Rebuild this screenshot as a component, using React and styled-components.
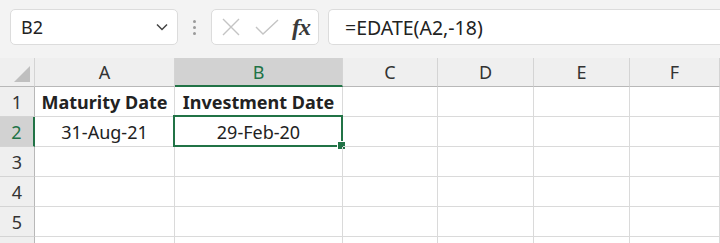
import styled, { createGlobalStyle } from "styled-components";

const GlobalStyle = createGlobalStyle`
    html, body {
        margin: 0;
        padding: 0;
        background: #ffffff;
        overflow: hidden;
    }
    body {
        font-family: "Noto Sans", "Open Sans", sans-serif;
        color: #222;
    }
`;

const columns = ["A", "B", "C", "D", "E", "F"];
const widths = [35, 140, 168, 95, 96, 96, 90];

const data = {
    1: { A: { text: "Maturity Date", bold: true }, B: { text: "Investment Date", bold: true } },
    2: { A: { text: "31-Aug-21" }, B: { text: "29-Feb-20" } },
};

function App() {
    return (
        <Wrapper>
            <GlobalStyle />
            {/* Formula bar */}
            <Toolbar>
                <NameBox>
                    <span>B2</span>
                    <svg width="14" height="10" viewBox="0 0 14 10">
                        <path d="M2 2.5 L7 7.5 L12 2.5" fill="none" stroke="#444" strokeWidth="1.5" />
                    </svg>
                </NameBox>
                <Dots>
                    <i />
                    <i />
                    <i />
                </Dots>
                <FxBox>
                    <svg width="22" height="22" viewBox="0 0 22 22">
                        <path d="M3 3 L19 19 M19 3 L3 19" stroke="#c4c4c4" strokeWidth="1.4" />
                    </svg>
                    <svg width="26" height="22" viewBox="0 0 26 22">
                        <path d="M2 11 L9 18 L24 4" fill="none" stroke="#c4c4c4" strokeWidth="1.4" />
                    </svg>
                    <Fx>fx</Fx>
                </FxBox>
                <FormulaBox>=EDATE(A2,-18)</FormulaBox>
            </Toolbar>

            {/* Grid */}
            <Sheet>
                <Corner>
                    <svg width="16" height="16" viewBox="0 0 16 16">
                        <path d="M16 0 L16 16 L0 16 Z" fill="#bfbfbf" />
                    </svg>
                </Corner>
                {columns.map((c) => (
                    <ColHead key={c} $active={c === "B"}>
                        {c}
                    </ColHead>
                ))}
                {[1, 2, 3, 4, 5, 6].map((r) => (
                    <Row key={r} r={r} />
                ))}
            </Sheet>
        </Wrapper>
    );
}

function Row({ r }) {
    // row 6 is only a sliver at the bottom edge, its number isn't visible
    return (
        <>
            <RowHead $active={r === 2}>{r < 6 ? r : ""}</RowHead>
            {columns.map((c) => {
                const cell = data[r] && data[r][c];
                const selected = r === 2 && c === "B";
                return (
                    <Cell key={c} $bold={cell && cell.bold}>
                        {cell ? cell.text : ""}
                        {selected && (
                            <Selection>
                                <Handle />
                            </Selection>
                        )}
                    </Cell>
                );
            })}
        </>
    );
}

export default App;

const Wrapper = styled.div`
    width: 720px;
    height: 243px;
    overflow: hidden;
    background: #ffffff;
`;

const Toolbar = styled.div`
    height: 58px;
    background: #f3f3f3;
    display: flex;
    align-items: flex-start;
    padding: 9px 0 0 10px;
    box-sizing: border-box;
`;

const Box = styled.div`
    height: 36px;
    box-sizing: border-box;
    background: #ffffff;
    border: 1px solid #dcdcdc;
    border-radius: 5px;
    display: flex;
    align-items: center;
`;

const NameBox = styled(Box)`
    width: 168px;
    padding: 0 8px 0 10px;
    justify-content: space-between;
    font-size: 18px;
    color: #222;
`;

const Dots = styled.div`
    width: 33px;
    height: 36px;
    display: flex;
    flex-direction: column;
    align-items: center;
    justify-content: center;
    gap: 3px;

    & > i {
        width: 3px;
        height: 3px;
        border-radius: 50%;
        background: #9a9a9a;
    }
`;

const FxBox = styled(Box)`
    width: 108px;
    padding: 0 6px 0 8px;
    justify-content: space-between;
`;

const Fx = styled.span`
    font-family: "Liberation Serif", "DejaVu Serif", serif;
    font-style: italic;
    font-weight: bold;
    font-size: 24px;
    color: #3a3a3a;
    line-height: 1;
    letter-spacing: -1px;
    padding-right: 2px;
`;

const FormulaBox = styled(Box)`
    flex: 1;
    margin-left: 9px;
    border-right: none;
    border-radius: 5px 0 0 5px;
    padding-left: 16px;
    font-size: 19.5px;
    color: #222;
`;

const Sheet = styled.div`
    display: grid;
    grid-template-columns: ${widths.map((w) => w + "px").join(" ")};
    grid-template-rows: 29px repeat(6, 30px);
`;

const Corner = styled.div`
    background: #efefef;
    border-right: 1px solid #d4d4d4;
    border-bottom: 1px solid #b8b8b8;
    display: flex;
    align-items: flex-end;
    justify-content: flex-end;
    padding: 0 4px 4px 0;
`;

const ColHead = styled.div`
    background: ${(p) => (p.$active ? "#d2d2d2" : "#efefef")};
    color: ${(p) => (p.$active ? "#217346" : "#333")};
    border-right: 1px solid #d4d4d4;
    border-bottom: ${(p) => (p.$active ? "2px solid #217346" : "1px solid #b8b8b8")};
    display: flex;
    align-items: center;
    justify-content: center;
    font-size: 18px;
`;

const RowHead = styled.div`
    background: ${(p) => (p.$active ? "#d2d2d2" : "#efefef")};
    color: ${(p) => (p.$active ? "#217346" : "#333")};
    border-right: ${(p) => (p.$active ? "2px solid #217346" : "1px solid #b8b8b8")};
    border-bottom: 1px solid #d4d4d4;
    display: flex;
    align-items: center;
    justify-content: center;
    font-size: 18px;
`;

const Cell = styled.div`
    position: relative;
    border-right: 1px solid #dadada;
    border-bottom: 1px solid #dadada;
    display: flex;
    align-items: center;
    justify-content: center;
    font-size: 18px;
    font-weight: ${(p) => (p.$bold ? 700 : 400)};
    color: #222;
    white-space: nowrap;
`;

const Selection = styled.div`
    position: absolute;
    left: -2px;
    top: -2px;
    right: -1px;
    bottom: -1px;
    border: 2px solid #217346;
    pointer-events: none;
`;

const Handle = styled.div`
    position: absolute;
    right: -5px;
    bottom: -5px;
    width: 7px;
    height: 7px;
    background: #217346;
    border: 1px solid #ffffff;
`;
